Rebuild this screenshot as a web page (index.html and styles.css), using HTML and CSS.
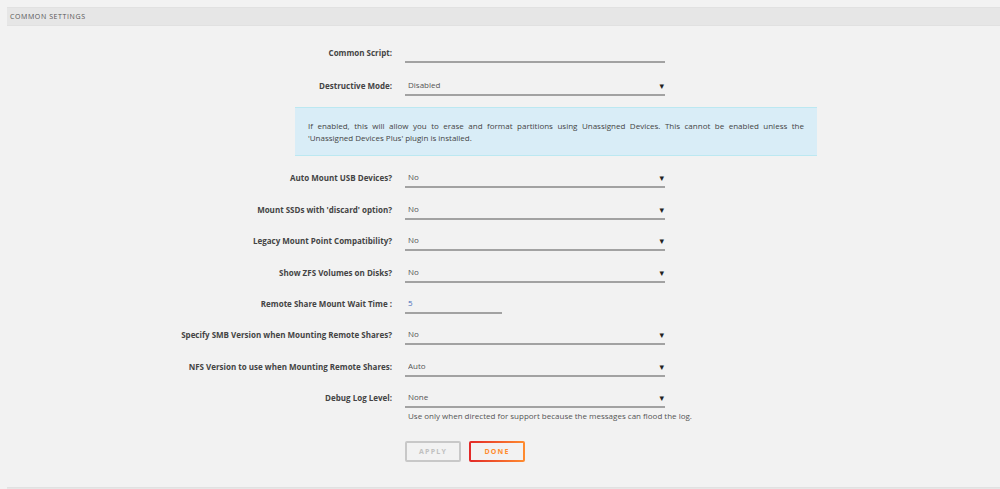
FILE: index.html
```html
<!DOCTYPE html>
<html lang="en">
<head>
    <meta charset="UTF-8">
    <meta name="viewport" content="width=device-width, initial-scale=1.0">
    <title>Unassigned Devices Settings</title>
    <link rel="stylesheet" href="styles.css">
</head>
<body>

<div class="title-bar">Common Settings</div>

<form class="settings" id="commonSettings">
    <div class="field field-first">
        <label for="commonScript">Common Script:</label>
        <input type="text" id="commonScript" name="commonScript">
    </div>
    <div class="field">
        <label for="destructive">Destructive Mode:</label>
        <span class="select-wrap"><select id="destructive" name="destructive"><option>Disabled</option><option>Enabled</option></select></span>
    </div>

    <div class="info">
        If enabled, this will allow you to erase and format partitions using Unassigned Devices. This cannot be enabled unless the 'Unassigned Devices Plus' plugin is installed.
    </div>

    <div class="field">
        <label for="automountUsb">Auto Mount USB Devices?</label>
        <span class="select-wrap"><select id="automountUsb"><option>No</option><option>Yes</option></select></span>
    </div>
    <div class="field">
        <label for="discard">Mount SSDs with 'discard' option?</label>
        <span class="select-wrap"><select id="discard"><option>No</option><option>Yes</option></select></span>
    </div>
    <div class="field">
        <label for="legacy">Legacy Mount Point Compatibility?</label>
        <span class="select-wrap"><select id="legacy"><option>No</option><option>Yes</option></select></span>
    </div>
    <div class="field">
        <label for="zfsVolumes">Show ZFS Volumes on Disks?</label>
        <span class="select-wrap"><select id="zfsVolumes"><option>No</option><option>Yes</option></select></span>
    </div>
    <div class="field">
        <label for="waitTime">Remote Share Mount Wait Time :</label>
        <input type="text" id="waitTime" class="narrow" value="5">
    </div>
    <div class="field">
        <label for="smbVersion">Specify SMB Version when Mounting Remote Shares?</label>
        <span class="select-wrap"><select id="smbVersion"><option>No</option><option>Yes</option></select></span>
    </div>
    <div class="field">
        <label for="nfsVersion">NFS Version to use when Mounting Remote Shares:</label>
        <span class="select-wrap"><select id="nfsVersion"><option>Auto</option><option>NFSv3</option><option>NFSv4</option></select></span>
    </div>
    <div class="field field-last">
        <label for="debugLevel">Debug Log Level:</label>
        <div>
            <span class="select-wrap"><select id="debugLevel"><option>None</option><option>Normal</option><option>Verbose</option></select></span>
            <p class="help">Use only when directed for support because the messages can flood the log.</p>
        </div>
    </div>

    <div class="buttons">
        <button type="submit" class="btn" disabled>Apply</button>
        <button type="button" class="btn btn-done">Done</button>
    </div>
</form>

<div class="title-bar title-next"></div>

</body>
</html>
```

FILE: styles.css
```css
body {
    font-family: "Open Sans", "DejaVu Sans", sans-serif;
    background-color: #f2f2f2;
    color: #4f4f4f;
    margin: 0;
    padding: 0;
}

.title-bar {
    margin: 7px 0 0 7px;
    height: 17px;
    line-height: 17px;
    padding-left: 3px;
    background-color: #e6e6e6;
    border-top: 1px solid #e1e1e1;
    border-bottom: 1px solid #e1e1e1;
    font-size: 7px;
    letter-spacing: 0.6px;
    text-transform: uppercase;
    color: #555;
}

.title-next {
    margin-top: 25px;
}

.settings {
    padding-top: 17px;
}

.field {
    display: grid;
    grid-template-columns: 392px 260px;
    column-gap: 13px;
    align-items: start;
    height: 20px;
    margin-bottom: 11.4px;
}

.field-first {
    margin-bottom: 13px;
}

.field label {
    text-align: right;
    font-weight: 700;
    font-size: 8px;
    line-height: 20px;
    color: #444;
}

input,
select {
    display: block;
    font-family: inherit;
    font-size: 8px;
    line-height: 18px;
    color: #555;
    background: transparent;
    border: none;
    border-bottom: 2px solid #a2a2a2;
    border-radius: 0;
    outline: none;
    box-sizing: border-box;
    height: 20px;
    padding: 0 3px;
    margin: 0;
}

input {
    width: 260px;
}

input.narrow {
    width: 97px;
    color: #486dba;
}

.select-wrap {
    position: relative;
    display: block;
    width: 260px;
    height: 20px;
}

.select-wrap select {
    width: 100%;
    appearance: none;
    -webkit-appearance: none;
}

.select-wrap::after {
    content: "\25BE";
    position: absolute;
    right: 1px;
    top: 0;
    line-height: 20px;
    font-size: 9px;
    color: #222;
    pointer-events: none;
}

.info {
    margin: 0 183px 12px 295px;
    padding: 11.5px 13px;
    background-color: #d9edf7;
    border-top: 1px solid #bce8f1;
    border-bottom: 1px solid #bce8f1;
    font-size: 8px;
    line-height: 12px;
    text-align: justify;
    color: #444;
}

.field-last {
    height: auto;
    margin-bottom: 0;
}

.help {
    margin: 2px 0 0 3px;
    font-size: 8px;
    line-height: 12px;
    white-space: nowrap;
    color: #555;
}

.buttons {
    display: flex;
    gap: 8px;
    margin: 19px 0 0 405px;
}

.btn {
    width: 56px;
    height: 21px;
    box-sizing: border-box;
    background: transparent;
    border: 2px solid #c8c8c8;
    border-radius: 2px;
    font-family: inherit;
    font-size: 7px;
    font-weight: 700;
    letter-spacing: 1.2px;
    text-transform: uppercase;
    color: #c0c0c0;
    padding: 0;
}

.btn-done {
    border: 2px solid transparent;
    background: linear-gradient(#f2f2f2, #f2f2f2) padding-box, linear-gradient(90deg, #e22828, #ff8c2f) border-box;
    color: #ff8c2f;
    cursor: pointer;
}
```
